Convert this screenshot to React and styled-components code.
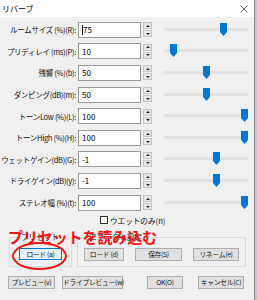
import styled, { createGlobalStyle } from "styled-components";

const rows = [
  { label: "ルームサイズ (%)(R):", value: "75", pos: 0.73, caret: true },
  { label: "プリディレイ (ms)(P):", value: "10", pos: 0.08 },
  { label: "残響 (%)(b):", value: "50", pos: 0.5 },
  { label: "ダンピング(dB)(m):", value: "50", pos: 0.5 },
  { label: "トーンLow (%)(L):", value: "100", pos: 1 },
  { label: "トーンHigh (%)(H):", value: "100", pos: 1 },
  { label: "ウェットゲイン(dB)(G):", value: "-1", pos: 0.64 },
  { label: "ドライゲイン(dB)(y):", value: "-1", pos: 0.64 },
  { label: "ステレオ幅 (%)(t):", value: "100", pos: 1 },
];

const Global = createGlobalStyle`
  html, body { margin: 0; padding: 0; background: #c4c2d4; }
  body { font-family: "Noto Sans CJK JP", "Noto Sans", sans-serif; }
`;

const Window = styled.div`
  position: relative;
  width: 254px;
  height: 300px;
  background: #f0f0f0;
  border-right: 1px solid #8c8c8c;
  overflow: hidden;
`;

const TitleBar = styled.div`
  height: 17px;
  background: #fff;
  display: flex;
  align-items: center;
  justify-content: space-between;
  padding: 0 6px 0 2px;
  font-size: 8px;
  color: #000;
`;

const Rows = styled.div`
  margin-top: 2px;
  display: grid;
  grid-auto-rows: 21.6px;
  align-items: center;
`;

const Row = styled.div`
  display: flex;
  align-items: center;
`;

const Label = styled.div`
  width: 76px;
  flex: none;
  display: flex;
  justify-content: flex-end;
  font-size: 7.5px;
  letter-spacing: -0.3px;
  white-space: nowrap;
  color: #111;
`;

const Field = styled.div`
  margin-left: 2px;
  width: 63px;
  height: 16px;
  box-sizing: border-box;
  background: #fff;
  border: 1px solid #9a9a9a;
  display: flex;
  align-items: center;
  padding-left: 3px;
  font-size: 8px;
  color: #000;
`;

const Caret = styled.span`
  display: inline-block;
  width: 1px;
  height: 10px;
  background: #000;
`;

const Spin = styled.div`
  margin-left: 2px;
  width: 9px;
  height: 15px;
  display: flex;
  flex-direction: column;
  gap: 1px;
`;

const SpinHalf = styled.div`
  flex: 1;
  background: #e6e6e6;
  border: 1px solid #c4c4c4;
  display: flex;
  align-items: center;
  justify-content: center;
  &::after {
    content: "";
    border-left: 2px solid transparent;
    border-right: 2px solid transparent;
    ${(p) =>
      p.$down ? "border-top: 2px solid #222;" : "border-bottom: 2px solid #222;"}
  }
`;

const Slider = styled.div`
  position: relative;
  margin-left: 12px;
  width: 84px;
  height: 14px;
`;

const Track = styled.div`
  position: absolute;
  left: 0;
  right: 0;
  top: 5px;
  height: 3px;
  background: #e2e2e2;
`;

const Thumb = styled.svg`
  position: absolute;
  top: 0;
`;

const CheckRow = styled.div`
  height: 14px;
  display: flex;
  align-items: center;
  padding-left: 100px;
  gap: 2px;
  font-size: 7.6px;
  color: #111;
`;

const Box = styled.span`
  width: 8px;
  height: 8px;
  box-sizing: border-box;
  border: 1px solid #333;
  background: #fff;
`;

const Groups = styled.div`
  margin-top: 6px;
  display: flex;
  padding-left: 9px;
  gap: 5px;
`;

const Group = styled.fieldset`
  margin: 0;
  width: ${(p) => p.$w}px;
  box-sizing: border-box;
  height: 34px;
  border: 1px solid #dcdcdc;
  padding: 1px 6px 0;
  display: flex;
  align-items: center;
  justify-content: ${(p) => (p.$single ? "center" : "space-between")};
`;

const Legend = styled.legend`
  font-size: 7.6px;
  color: #111;
  padding: 0 1px;
  margin-left: 4px;
  line-height: 8px;
`;

const Button = styled.button`
  height: ${(p) => p.$h || 13}px;
  width: ${(p) => p.$w}px;
  padding: 0;
  box-sizing: border-box;
  background: ${(p) => (p.$focus ? "#e5f1fb" : "#e1e1e1")};
  border: 1px solid ${(p) => (p.$focus ? "#0078d7" : "#adadad")};
  font-family: "Noto Sans CJK JP", sans-serif;
  font-size: 6.8px;
  letter-spacing: -0.3px;
  color: #111;
  white-space: nowrap;
  line-height: 1;
`;

const Footer = styled.div`
  margin-top: 9px;
  display: flex;
  justify-content: space-between;
  padding: 0 10px 0 8px;
`;

const ButtonSet = styled.div`
  display: flex;
  gap: ${(p) => p.$gap}px;
`;

const Note = styled.div`
  position: absolute;
  left: 8px;
  top: 226px;
  font-size: 15px;
  font-weight: 700;
  letter-spacing: -0.1px;
  color: #f21414;
  white-space: nowrap;
`;

const Ring = styled.div`
  position: absolute;
  left: 12px;
  top: 242px;
  width: 55px;
  height: 28px;
  box-sizing: border-box;
  border: 2.5px solid #f21414;
  border-radius: 50%;
`;

function Close() {
  return (
    <svg width="8" height="8" viewBox="0 0 8 8">
      <path d="M0.5 0.5 L7.5 7.5 M7.5 0.5 L0.5 7.5" stroke="#555" strokeWidth="0.9" />
    </svg>
  );
}

function SliderControl({ pos }) {
  return (
    <Slider>
      <Track />
      <Thumb width="7" height="13" viewBox="0 0 7 13" style={{ left: `${pos * 77}px` }}>
        <path d="M0 0 H7 V9 L3.5 13 L0 9 Z" fill="#0078d7" />
      </Thumb>
    </Slider>
  );
}

export default function App() {
  return (
    <>
      <Global />
      <Window>
        <TitleBar>
          <span>リバーブ</span>
          <Close />
        </TitleBar>
        <Rows>
          {rows.map((r) => (
            <Row key={r.label}>
              <Label>{r.label}</Label>
              <Field>
                {r.caret && <Caret />}
                {r.value}
              </Field>
              <Spin>
                <SpinHalf />
                <SpinHalf $down />
              </Spin>
              <SliderControl pos={r.pos} />
            </Row>
          ))}
        </Rows>
        <CheckRow>
          <Box />
          <span>ウエットのみ(n)</span>
        </CheckRow>
        <Groups>
          <Group $w={63} $single>
            <Legend>プリセット</Legend>
            <Button $w={43} $h={12} $focus>ロード (a)</Button>
          </Group>
          <Group $w={169}>
            <Legend>エフェクト設定</Legend>
            <Button $w={40}>ロード (d)</Button>
            <Button $w={47}>保存(S)</Button>
            <Button $w={46}>リネーム(e)</Button>
          </Group>
        </Groups>
        <Footer>
          <ButtonSet $gap={7}>
            <Button $w={47}>プレビュー(v)</Button>
            <Button $w={61}>ドライプレビュー(w)</Button>
          </ButtonSet>
          <ButtonSet $gap={15}>
            <Button $w={36}>OK(O)</Button>
            <Button $w={46}>キャンセル(C)</Button>
          </ButtonSet>
        </Footer>
        <Note>プリセットを読み込む</Note>
        <Ring />
      </Window>
    </>
  );
}
